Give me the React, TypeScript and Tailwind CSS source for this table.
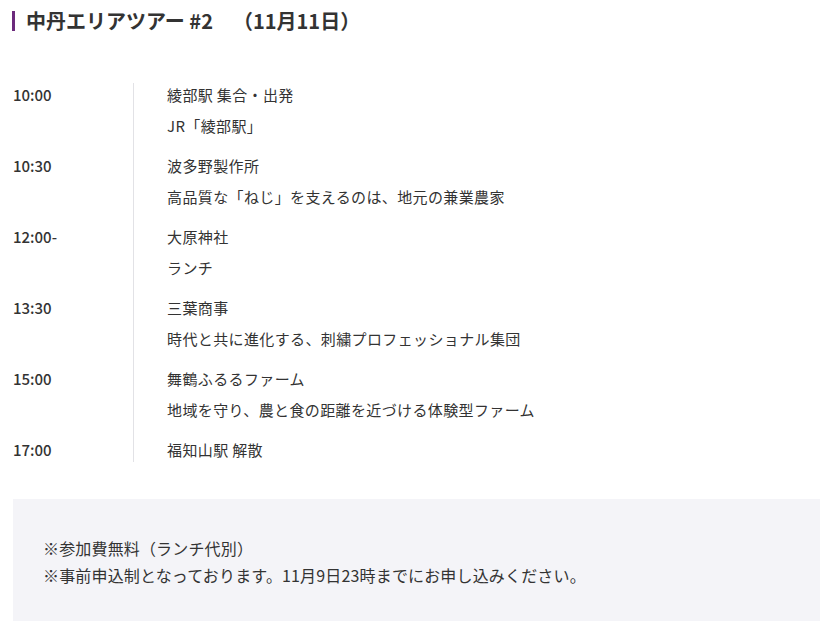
import React from "react";

const rows: { time: string; lines: string[] }[] = [
  { time: "10:00", lines: ["綾部駅 集合・出発", "JR「綾部駅」"] },
  { time: "10:30", lines: ["波多野製作所", "高品質な「ねじ」を支えるのは、地元の兼業農家"] },
  { time: "12:00-", lines: ["大原神社", "ランチ"] },
  { time: "13:30", lines: ["三葉商事", "時代と共に進化する、刺繍プロフェッショナル集団"] },
  { time: "15:00", lines: ["舞鶴ふるるファーム", "地域を守り、農と食の距離を近づける体験型ファーム"] },
  { time: "17:00", lines: ["福知山駅 解散"] },
];

export default function App() {
  return (
    <div
      className="w-[827px] h-[630px] bg-white text-[#333] overflow-hidden"
      style={{ fontFamily: '"Noto Sans CJK JP", "Noto Sans", sans-serif' }}
    >
      <div className="pl-[12px] pt-[11px] flex items-center">
        <div className="w-[3px] h-[20px] bg-[#6c2a7c]" />
        <h1 className="ml-[11px] text-[20px] font-bold leading-[20px] text-[#333] flex">
          <span>中丹エリアツアー #2</span>
          <span className="ml-[20px]">（11月11日）</span>
        </h1>
      </div>

      <div className="mt-[52px] ml-[13px] grid grid-cols-[120px_1fr]">
        {rows.map((r, i) => (
          <React.Fragment key={r.time}>
            <div className={`text-[15px] font-medium leading-[24px] ${i < rows.length - 1 ? "pb-[16px]" : ""}`}>
              {r.time}
            </div>
            <div
              className={`border-l border-[#e2e2e6] pl-[33px] text-[15px] tracking-[0.025em] leading-[24px] flex flex-col gap-[7px] ${i < rows.length - 1 ? "pb-[16px]" : "pb-0"}`}
            >
              {r.lines.map((l, j) => (
                <div key={l} className={i === rows.length - 1 && j === r.lines.length - 1 ? "h-[22px]" : ""}>
                  {l}
                </div>
              ))}
            </div>
          </React.Fragment>
        ))}
      </div>

      <div className="mt-[37px] ml-[13px] w-[807px] bg-[#f4f4f8] pl-[30px] pt-[36px] pb-[32px] text-[16px] tracking-[0.01em] leading-[27px]">
        <div>※参加費無料（ランチ代別）</div>
        <div>※事前申込制となっております。11月9日23時までにお申し込みください。</div>
      </div>
    </div>
  );
}
